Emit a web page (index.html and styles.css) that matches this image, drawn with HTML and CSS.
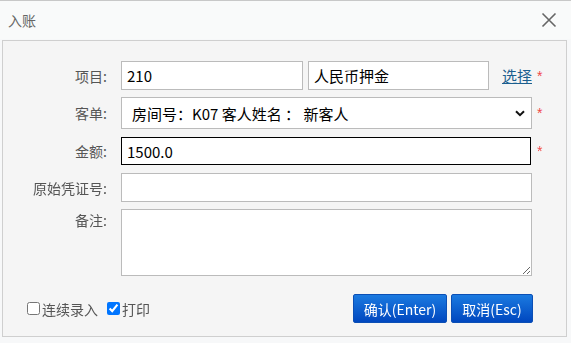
FILE: index.html
```html
<!DOCTYPE html>
<html lang="zh-CN">
<head>
    <meta charset="UTF-8">
    <meta name="viewport" content="width=device-width, initial-scale=1.0">
    <title>入账</title>
    <link rel="stylesheet" href="styles.css">
</head>
<body>
    <div class="dialog">
        <div class="titlebar">
            <span class="title">入账</span>
            <svg class="close" width="16" height="16" viewBox="0 0 16 16">
                <path d="M1.5 1.5 L14.5 14.5 M14.5 1.5 L1.5 14.5" stroke="#666" stroke-width="1.6" fill="none"/>
            </svg>
        </div>
        <div class="panel">
            <div class="row">
                <label class="label">项目:</label>
                <div class="field split">
                    <input class="input code" type="text" value="210">
                    <input class="input name" type="text" value="人民币押金">
                    <a class="pick" href="#">选择</a>
                </div>
                <span class="star">*</span>
            </div>
            <div class="row wide">
                <label class="label">客单:</label>
                <div class="field select-wrap">
                    <select class="input select">
                        <option>房间号：K07 客人姓名 ： 新客人</option>
                    </select>
                    <svg class="chevron" width="10" height="7" viewBox="0 0 10 7">
                        <path d="M1 1.2 L5 5.2 L9 1.2" stroke="#111" stroke-width="2" fill="none"/>
                    </svg>
                </div>
                <span class="star">*</span>
            </div>
            <div class="row wide">
                <label class="label">金额:</label>
                <div class="field">
                    <input class="input amount" type="text" value="1500.0" autofocus>
                </div>
                <span class="star">*</span>
            </div>
            <div class="row">
                <label class="label">原始凭证号:</label>
                <div class="field">
                    <input class="input voucher" type="text">
                </div>
            </div>
            <div class="row top">
                <label class="label">备注:</label>
                <div class="field">
                    <textarea class="input memo"></textarea>
                </div>
            </div>
            <div class="footer">
                <div class="checks">
                    <label class="check"><input type="checkbox">连续录入</label>
                    <label class="check"><input type="checkbox" checked>打印</label>
                </div>
                <div class="buttons">
                    <button class="btn ok">确认(Enter)</button>
                    <button class="btn cancel">取消(Esc)</button>
                </div>
            </div>
        </div>
    </div>
</body>
</html>
```

FILE: styles.css
```css
body {
    margin: 0;
    background: #f4f4f4;
    font-family: "Noto Sans CJK SC", "Noto Sans", sans-serif;
    color: #555;
}
.dialog {
    width: 571px;
    height: 343px;
    box-sizing: border-box;
    border-top: 1px solid #c8c8c8;
    background: #f7f8f9;
}
.titlebar {
    height: 38px;
    display: flex;
    align-items: center;
    justify-content: space-between;
    padding: 0 14px 0 8px;
    background: #f9fafa;
}
.title {
    font-size: 14px;
    color: #666;
}
.close {
    display: block;
}
.panel {
    margin: 1px 4px 0 2px;
    height: 297px;
    border: 1px solid #cfcfcf;
    background: #f5f5f5;
    padding-top: 20px;
    box-sizing: border-box;
}
.row {
    display: flex;
    align-items: center;
    margin-bottom: 7px;
    line-height: 20px;
}
.row.wide {
    margin-bottom: 8px;
}
.row.top {
    align-items: flex-start;
}
.label {
    width: 104px;
    margin-right: 14px;
    text-align: right;
    font-size: 14px;
    color: #555;
    flex-shrink: 0;
}
.row.top .label {
    margin-top: 1px;
}
.field {
    width: 411px;
    display: flex;
    align-items: center;
    flex-shrink: 0;
}
.input {
    box-sizing: border-box;
    border: 1px solid #bbb;
    background: #fff;
    font-family: "Noto Sans CJK SC", "Noto Sans", sans-serif;
    font-size: 15px;
    color: #000;
    padding: 0 5px;
    margin: 0;
    outline: none;
    border-radius: 0;
}
.code {
    width: 182px;
    height: 29px;
}
.name {
    width: 181px;
    height: 29px;
    margin-left: 5px;
}
.pick {
    margin-left: 13px;
    font-size: 15px;
    color: #1c5f8f;
    text-decoration: underline;
    white-space: nowrap;
    flex-shrink: 0;
}
.star {
    margin-left: 5px;
    color: #f04848;
    font-size: 14px;
    font-family: "Liberation Sans", sans-serif;
}
.select-wrap {
    position: relative;
}
.select {
    width: 411px;
    height: 32px;
    appearance: none;
    -webkit-appearance: none;
    padding: 0 10px;
}
.chevron {
    position: absolute;
    right: 7px;
    top: 13px;
}
.amount {
    width: 410px;
    height: 28px;
    border-color: #000;
}
.voucher {
    width: 411px;
    height: 29px;
}
.memo {
    width: 411px;
    height: 67px;
    resize: vertical;
    display: block;
}
.footer {
    display: flex;
    justify-content: space-between;
    align-items: center;
    padding: 11px 33px 0 21px;
}
.checks {
    display: flex;
    align-items: center;
    gap: 6px;
    font-size: 14px;
    color: #555;
}
.check {
    display: flex;
    align-items: center;
}
.check input {
    margin: 0 2px 0 3px;
    width: 13px;
    height: 13px;
}
.buttons {
    display: flex;
    gap: 4px;
}
.btn {
    height: 29px;
    border: 1px solid #0b4fb5;
    border-radius: 2px;
    background: linear-gradient(#1b7ae0, #0047bf);
    color: #fff;
    font-family: "Noto Sans CJK SC", "Noto Sans", sans-serif;
    font-size: 14px;
    padding: 0;
    cursor: pointer;
}
.ok {
    width: 94px;
}
.cancel {
    width: 82px;
}
```
